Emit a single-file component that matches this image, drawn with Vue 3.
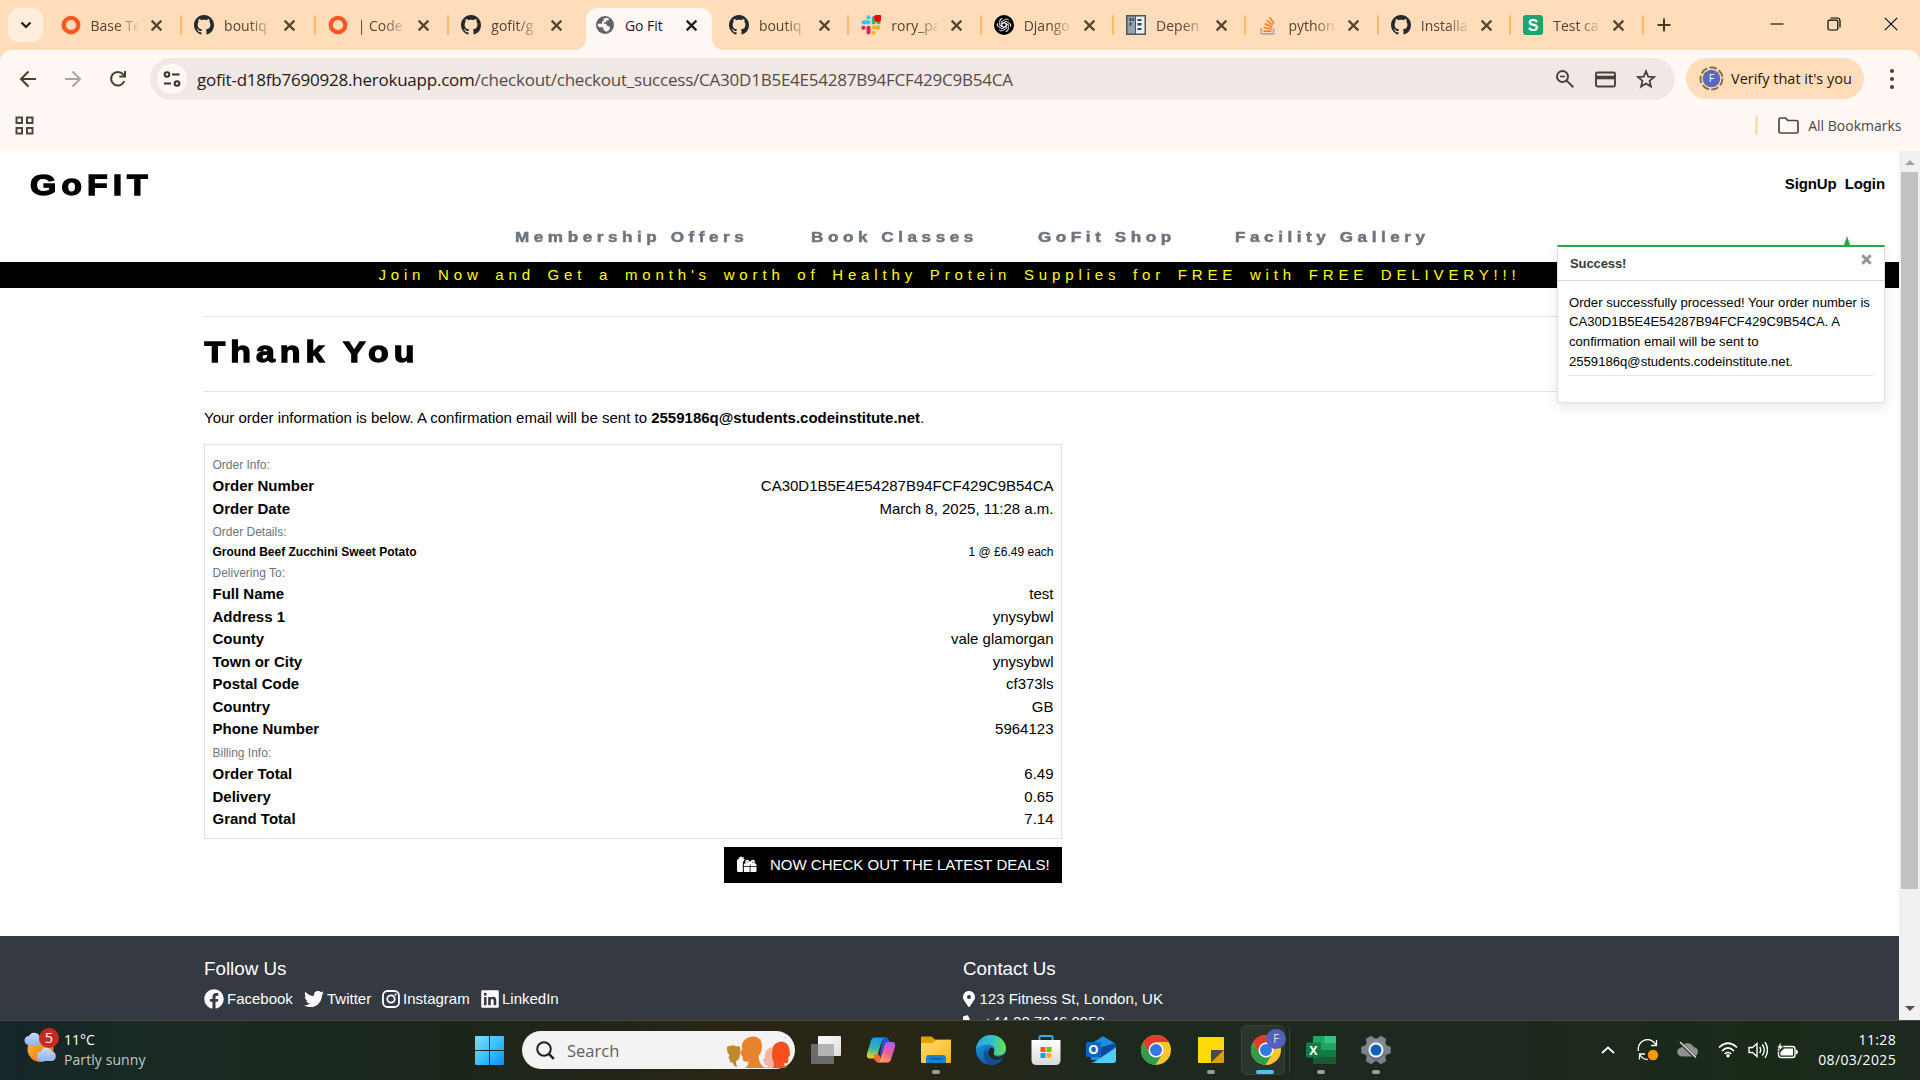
<script setup>
const tabs = [
  { icon: 'ring', title: 'Base Te' },
  { icon: 'github', title: 'boutiq' },
  { icon: 'ring', title: '| Code' },
  { icon: 'github', title: 'gofit/g' },
  { icon: 'globe', title: 'Go Fit', active: true },
  { icon: 'github', title: 'boutiq' },
  { icon: 'slack', title: 'rory_pa' },
  { icon: 'gpt', title: 'Django' },
  { icon: 'docs', title: 'Depen' },
  { icon: 'stack', title: 'python' },
  { icon: 'github', title: 'Installa' },
  { icon: 'sheet', title: 'Test ca' },
]

const nav = [
  { label: 'Membership Offers', w: 296 },
  { label: 'Book Classes', w: 227 },
  { label: 'GoFit Shop', w: 197 },
  { label: 'Facility Gallery', w: 205 },
]

const rows = [
  { head: 'Order Info:' },
  { k: 'Order Number', v: 'CA30D1B5E4E54287B94FCF429C9B54CA' },
  { k: 'Order Date', v: 'March 8, 2025, 11:28 a.m.' },
  { head: 'Order Details:', low: true },
  { k: 'Ground Beef Zucchini Sweet Potato', v: '1 @ £6.49 each', small: true },
  { head: 'Delivering To:' },
  { k: 'Full Name', v: 'test' },
  { k: 'Address 1', v: 'ynysybwl' },
  { k: 'County', v: 'vale glamorgan' },
  { k: 'Town or City', v: 'ynysybwl' },
  { k: 'Postal Code', v: 'cf373ls' },
  { k: 'Country', v: 'GB' },
  { k: 'Phone Number', v: '5964123' },
  { head: 'Billing Info:', tall: true },
  { k: 'Order Total', v: '6.49' },
  { k: 'Delivery', v: '0.65' },
  { k: 'Grand Total', v: '7.14' },
]

const github = 'M8 0C3.58 0 0 3.58 0 8c0 3.54 2.29 6.53 5.47 7.59.4.07.55-.17.55-.38 0-.19-.01-.82-.01-1.49-2.01.37-2.53-.49-2.69-.94-.09-.23-.48-.94-.82-1.13-.28-.15-.68-.52-.01-.53.63-.01 1.08.58 1.23.82.72 1.21 1.87.87 2.33.66.07-.52.28-.87.51-1.07-1.78-.2-3.64-.89-3.64-3.95 0-.87.31-1.59.82-2.15-.08-.2-.36-1.02.08-2.12 0 0 .67-.21 2.2.82.64-.18 1.32-.27 2-.27s1.36.09 2 .27c1.53-1.04 2.2-.82 2.2-.82.44 1.1.16 1.92.08 2.12.51.56.82 1.27.82 2.15 0 3.07-1.87 3.75-3.65 3.95.29.25.54.73.54 1.48 0 1.07-.01 1.93-.01 2.2 0 .21.15.46.55.38A8.01 8.01 0 0 0 16 8c0-4.42-3.58-8-8-8z'
const knot = [0, 60, 120, 180, 240, 300]
const teeth = [0, 60, 120, 180, 240, 300]
</script>

<template>
  <div class="screen">
    <div class="tabstrip">
      <div class="tabsearch">
        <svg width="12" height="8" viewBox="0 0 12 8"><path d="M1.5 1.5 6 6l4.5-4.5" fill="none" stroke="#261a0e" stroke-width="2.2" /></svg>
      </div>
      <div v-for="(t, i) in tabs" :key="i" class="tab" :class="{ active: t.active, early: i < 4, sep: i !== 3 && i !== 4 }">
        <svg v-if="t.icon === 'ring'" class="fav" viewBox="0 0 20 20"><ellipse cx="10" cy="10" rx="7.3" ry="7.2" fill="none" stroke="#ff5722" stroke-width="4.3" /></svg>
        <svg v-else-if="t.icon === 'github'" class="fav" viewBox="0 0 16 16"><path :d="github" fill="#24292f" /></svg>
        <svg v-else-if="t.icon === 'globe'" class="fav" viewBox="0 0 20 20">
          <circle cx="10" cy="10" r="9" fill="#5f6368" />
          <path d="M11.5 2.8c-3 .2-3.500 1.800-2.800 3.300-1.500.2-2.200 1.200-1.600 2.600H4c-.9 0-1.200 0-1.400.5.2 1.200.6 2.200 1.200 3.100h3.400c1 0 1.300.8 1.300 1.600v1.600h1.800v1.300c2 .1 4.600-1.500 4.700-4-.1-1.500-1.200-1.800-2.500-1.900l-1.500-2.200H8.900V7.200h2.300V5.500h2.200c0-1 .3-1.500 1-1.700z" fill="#fff8f4" />
        </svg>
        <svg v-else-if="t.icon === 'slack'" class="fav" viewBox="0 0 20 20">
          <g stroke-width="4" stroke-linecap="round">
            <path d="M2.500 7.300h5" stroke="#36c5f0" /><path d="M7.500 2.300v.1" stroke="#36c5f0" />
            <path d="M12.700 3v4.500" stroke="#2eb67d" /><path d="M17.600 7.400h.1" stroke="#2eb67d" />
            <path d="M12.700 12.600h4.800" stroke="#ecb22e" /><path d="M12.600 17.700v.1" stroke="#ecb22e" />
            <path d="M7.500 12.700v4.800" stroke="#e01e5a" /><path d="M2.400 12.700h.1" stroke="#e01e5a" />
          </g>
          <circle cx="16.800" cy="3.200" r="3.800" fill="#f00" />
        </svg>
        <svg v-else-if="t.icon === 'gpt'" class="fav" viewBox="0 0 20 20">
          <circle cx="10" cy="10" r="10" fill="#000" />
          <g fill="none" stroke="#fff" stroke-width=".9">
            <path v-for="a in knot" :key="a" d="M10 7.600 12.300 9v4.600l-3.600 2a2.800 2.800 0 0 1-3.500-.9" :transform="`rotate(${a} 10 10)`" />
          </g>
        </svg>
        <svg v-else-if="t.icon === 'docs'" class="fav" viewBox="0 0 20 20">
          <path d="M0 0h20v20H0z" fill="#45575f" /><path d="M1.500 1.500h7.500v17H1.500z" fill="#90a4ae" /><path d="M10 1.500h8.500v17H10z" fill="#eceff1" />
          <path d="M3.500 3h2v3h-2zM6.500 3h1.500v3H6.500zM3.500 7.500h2v3h-2zM11.500 4h4v2h-4zM11.500 8h4v2.500h-4zM11.500 13h4v2h-4z" fill="#37474f" />
        </svg>
        <svg v-else-if="t.icon === 'stack'" class="fav" viewBox="0 0 20 20">
          <path d="M3.300 13v5.800h12.200V13" fill="none" stroke="#a7abb0" stroke-width="1.700" />
          <g stroke="#f48024" stroke-width="1.700"><path d="M5.500 16.200h8" /><path d="m5.700 12.500 8 1.500" /><path d="m6.600 8.700 7.500 3.300" /><path d="m8.500 5.200 6.300 5" /><path d="m11.500 2.200 4.500 6.400" /></g>
        </svg>
        <svg v-else class="fav" viewBox="0 0 20 20">
          <rect width="20" height="20" rx="3" fill="#1aa571" /><text x="10" y="16" text-anchor="middle" font-family="Liberation Sans, sans-serif" font-weight="700" font-size="16" fill="#fff">S</text>
        </svg>
        <span class="title">{{ t.title }}</span>
        <svg class="x" viewBox="0 0 12 12"><path d="m1.500 1.500 9 9m0-9-9 9" stroke="currentColor" stroke-width="2" /></svg>
      </div>
      <svg class="plus" width="14" height="14" viewBox="0 0 14 14"><path d="M7 .5v13M.5 7h13" stroke="#4a3a28" stroke-width="2" /></svg>
      <div class="winctl">
        <svg width="14" height="14" viewBox="0 0 14 14"><path d="M.5 7h13" stroke="#000" stroke-width="1.100" /></svg>
        <svg width="14" height="14" viewBox="0 0 14 14" fill="none" stroke="#000" stroke-width="1.200"><rect x="1" y="3.200" width="9.800" height="9.800" rx="1.500" /><path d="M3.500 1h6.500q3 0 3 3v6.500" /></svg>
        <svg width="14" height="14" viewBox="0 0 14 14"><path d="m.8.8 12.400 12.400m0-12.400L.8 13.200" stroke="#000" stroke-width="1.100" /></svg>
      </div>
    </div>

    <div class="chrome">
      <div class="toolbar">
        <div class="navbtns">
          <svg width="18" height="18" viewBox="0 0 18 18" fill="none" stroke="#4d3e2c" stroke-width="2"><path d="M17 9H2.500M9.500 1.500 2 9l7.500 7.500" /></svg>
          <svg width="18" height="18" viewBox="0 0 18 18" fill="none" stroke="#b0a6a0" stroke-width="2"><path d="M1 9h14.500M8.500 1.500 16 9l-7.500 7.500" /></svg>
          <svg width="18" height="18" viewBox="0 0 18 18" fill="none" stroke="#4d3e2c" stroke-width="2"><path d="M15.300 11A6.800 6.800 0 1 1 14 4.200l1.500 1.500" /><path d="M16 1v5.500H10.300" /></svg>
        </div>
        <div class="omni">
          <div class="site">
            <svg width="18" height="16" viewBox="0 0 18 16" fill="none" stroke="#3b2f2a" stroke-width="2"><circle cx="4" cy="3.500" r="2.300" /><path d="M9 3.500h7.500M1 12.500h7" /><circle cx="14" cy="12.500" r="2.300" /></svg>
          </div>
          <div class="url">gofit-d18fb7690928.herokuapp.com<span>/checkout/checkout_success/CA30D1B5E4E54287B94FCF429C9B54CA</span></div>
          <div class="omni-icons">
            <svg width="20" height="20" viewBox="0 0 20 20" fill="none" stroke="#4a3f3a" stroke-width="2"><circle cx="7.500" cy="7.500" r="5.500" /><path d="m11.600 11.600 6.700 6.700" /><path d="M5 7.500h5" stroke-width="1.600" /></svg>
            <svg width="21" height="20" viewBox="0 0 21 20" fill="none" stroke="#4a3f3a" stroke-width="1.900"><rect x="1" y="3.500" width="19" height="14" rx="1.500" /><path d="M1 8.500h19" stroke-width="3.600" /></svg>
            <svg width="20" height="20" viewBox="0 0 20 20" fill="none" stroke="#4a3f3a" stroke-width="1.800"><path d="m10 2.300 2.200 5.300 5.800.5-4.400 3.800 1.300 5.600-4.900-3-4.900 3 1.300-5.600L2 8.100l5.800-.5z" /></svg>
          </div>
        </div>
        <div class="verify">
          <svg width="25" height="25" viewBox="0 0 25 25"><circle cx="12.500" cy="12.500" r="11" fill="none" stroke="#8b6c45" stroke-width="2" stroke-dasharray="7.500 2.400" /><circle cx="12.500" cy="12.500" r="8.800" fill="#5a69bd" /><text x="12.500" y="16.300" text-anchor="middle" font-family="Open Sans, sans-serif" font-size="10.500" fill="#fff">F</text></svg>
          <span>Verify that it's you</span>
        </div>
        <svg class="dots" width="4" height="20" viewBox="0 0 4 20" fill="#4a3a28"><circle cx="2" cy="2" r="2" /><circle cx="2" cy="10" r="2" /><circle cx="2" cy="18" r="2" /></svg>
      </div>
      <div class="bookmarks">
        <svg width="19" height="19" viewBox="0 0 19 19" fill="none" stroke="#51463d" stroke-width="2"><path d="M1.500 1.500h5.500v5.500H1.500zM12 1.500h5.500v5.500H12zM1.500 12h5.500v5.500H1.500zM12 12h5.500v5.500H12z" /></svg>
        <div class="allbm">
          <i></i>
          <svg width="21" height="17" viewBox="0 0 21 17" fill="none" stroke="#51463d" stroke-width="1.700"><path d="M1 14.500v-12Q1 1 2.500 1h5l2.300 2.500h8.700Q20 3.500 20 5v9.500q0 1.500-1.500 1.500h-16Q1 16 1 14.500z" /></svg>
          <span>All Bookmarks</span>
        </div>
      </div>
    </div>

    <div class="viewport">
      <div class="page">
        <header>
          <div class="brandrow"><div class="brand heavy">GoFIT</div><div class="auth"><span>SignUp</span><span>Login</span></div></div>
          <nav><a v-for="n in nav" :key="n.label" :style="{ width: n.w + 'px' }"><span>{{ n.label }}</span></a></nav>
          <div class="banner">Join Now and Get a month's worth of Healthy Protein Supplies for FREE with FREE DELIVERY!!!</div>
        </header>
        <main>
          <hr />
          <h2 class="heavy">Thank You</h2>
          <hr />
          <p class="lead">Your order information is below. A confirmation email will be sent to <b>2559186q@students.codeinstitute.net</b>.</p>
          <div class="card">
            <template v-for="(r, i) in rows" :key="i">
              <div v-if="r.head" class="head" :class="{ tall: r.tall, low: r.low }">{{ r.head }}</div>
              <div v-else class="row" :class="{ small: r.small }"><b>{{ r.k }}</b><span>{{ r.v }}</span></div>
            </template>
          </div>
          <div class="actions">
            <a class="deals">
              <svg width="20" height="17" viewBox="0 0 20 17" fill="#fff"><path d="M0 4.500Q0 3 1.500 3H2L1.300 1.300 3 1.500 4 0l1 1.500 2.200-.7L6.300 3h1.400L6.500 5.200q-.7.700-.7 2v8.800H1.500Q0 16 0 14.500z" /><path d="M6.800 10V8.500q0-1 1-1h.8Q7.500 4 10 3.700q2 0 3 2.200 1-2.200 3-2.200 2.700.3 1.500 3.800h1q1 0 1 1V10h-5.800V8.500h-.8V10zM9.700 6.600h1.400Q10.600 5.400 10 5.400t-.3 1.200zm5.200 0h1.400Q16.600 5.400 16 5.400t-1.100 1.200zM6.800 10.800h5.900v5.200H7.800q-1 0-1-1zM13.500 10.800h6v4.200q0 1-1 1h-5z" /></svg>
              <span>NOW CHECK OUT THE LATEST DEALS!</span>
            </a>
          </div>
        </main>
        <footer>
          <div class="follow">
            <h5>Follow Us</h5>
            <div class="links">
              <a class="l1"><svg width="20" height="20" viewBox="0 0 512 512"><path d="M504 256C504 119 393 8 256 8S8 119 8 256c0 123.780 90.690 226.380 209.250 245V327.690h-63V256h63v-54.640c0-62.150 37-96.480 93.670-96.480 27.140 0 55.520 4.840 55.520 4.840v61h-31.280c-30.800 0-40.410 19.120-40.410 38.730V256h68.780l-11 71.690h-57.780V501C413.310 482.380 504 379.780 504 256z" /></svg>Facebook</a>
              <a class="l2"><svg width="20" height="20" viewBox="0 0 512 512"><path d="M459.370 151.716c.325 4.548.325 9.097.325 13.645 0 138.720-105.583 298.558-298.558 298.558-59.452 0-114.680-17.219-161.137-47.106 8.447.974 16.568 1.299 25.340 1.299 49.055 0 94.213-16.568 130.274-44.832-46.132-.975-84.792-31.188-98.112-72.772 6.498.974 12.995 1.624 19.818 1.624 9.421 0 18.843-1.300 27.614-3.573-48.081-9.747-84.143-51.980-84.143-102.985v-1.299c13.969 7.797 30.214 12.670 47.431 13.319-28.264-18.843-46.781-51.005-46.781-87.391 0-19.492 5.197-37.360 14.294-52.954 51.655 63.675 129.300 105.258 216.365 109.807-1.624-7.797-2.599-15.918-2.599-24.040 0-57.828 46.782-104.934 104.934-104.934 30.213 0 57.502 12.670 76.670 33.137 23.715-4.548 46.456-13.320 66.599-25.340-7.798 24.366-24.366 44.833-46.132 57.827 21.117-2.273 41.584-8.122 60.426-16.243-14.292 20.791-32.161 39.308-52.628 54.253z" /></svg>Twitter</a>
              <a class="l3"><svg width="18" height="20" viewBox="0 0 18 20"><g fill="none" stroke="#fff" stroke-width="1.800"><rect x="1" y="2" width="16" height="16" rx="4.500" /><circle cx="9" cy="10" r="3.700" /></g><circle cx="13.600" cy="5.500" r="1.100" /></svg>Instagram</a>
              <a class="l4"><svg width="18" height="20" viewBox="0 0 448 512"><path d="M416 32H31.900C14.300 32 0 46.500 0 64.300v383.400C0 465.500 14.300 480 31.900 480H416c17.600 0 32-14.500 32-32.300V64.300c0-17.800-14.400-32.300-32-32.300zM135.400 416H69V202.200h66.500V416zm-33.200-243c-21.300 0-38.500-17.300-38.500-38.500S80.900 96 102.200 96c21.200 0 38.500 17.300 38.500 38.500 0 21.300-17.200 38.500-38.500 38.500zm282.100 243h-66.400V312c0-24.800-.5-56.700-34.500-56.700-34.600 0-39.900 27-39.900 54.900V416h-66.400V202.200h63.700v29.200h.9c8.900-16.800 30.600-34.500 62.900-34.500 67.200 0 79.700 44.300 79.700 101.900V416z" /></svg>LinkedIn</a>
            </div>
          </div>
          <div class="contact">
            <h5>Contact Us</h5>
            <div class="line"><svg width="12" height="16" viewBox="0 0 384 512"><path d="M172.268 501.670C26.970 291.031 0 269.413 0 192 0 85.961 85.961 0 192 0s192 85.961 192 192c0 77.413-26.970 99.031-172.268 309.670-9.535 13.774-29.930 13.773-39.464 0zM192 256a64 64 0 1 0 0-128 64 64 0 0 0 0 128z" /></svg>123 Fitness St, London, UK</div>
            <div class="line phone"><svg width="15" height="15" viewBox="0 0 15 15"><path d="M.7 1.200 4.200.2q.7-.1 1 .5l1.500 3.500q.2.600-.3 1L4.600 6.800q1.200 2.400 3.600 3.600l1.600-1.900q.4-.5 1-.2l3.500 1.500q.6.300.5 1l-.8 3.500q-.2.700-.9.700Q0 15 0 2q0-.6.7-.8z" /></svg>+44 20 7946 0958</div>
          </div>
        </footer>
        <div class="arrow"></div>
        <div class="toast">
          <div class="thead"><strong>Success!</strong><svg width="11" height="11" viewBox="0 0 11 11"><path d="m1.300 1.300 8.400 8.400m0-8.400L1.300 9.700" stroke="#949494" stroke-width="3" /></svg></div>
          <div class="tbody">
            <div>Order successfully processed! Your order number is</div>
            <div>CA30D1B5E4E54287B94FCF429C9B54CA. A</div>
            <div>confirmation email will be sent to</div>
            <div>2559186q@students.codeinstitute.net.</div>
            <hr />
          </div>
        </div>
      </div>
      <div class="scroll">
        <svg width="10" height="5" viewBox="0 0 10 5"><path d="M0 5 5 0l5 5z" fill="#a3a3a3" /></svg>
        <div class="thumb"></div>
        <svg width="10" height="5" viewBox="0 0 10 5"><path d="M0 0h10L5 5z" fill="#505050" /></svg>
      </div>
    </div>

    <div class="taskbar">
      <div class="weather">
        <svg width="38" height="38" viewBox="0 0 38 38">
          <defs>
            <linearGradient id="sun" x1="0" y1="0" x2="1" y2="1"><stop offset="0" stop-color="#fbc02d" /><stop offset="1" stop-color="#ee6a10" /></linearGradient>
            <linearGradient id="cl" x1="0" y1="0" x2="0" y2="1"><stop offset="0" stop-color="#c9dcfb" /><stop offset="1" stop-color="#8fb5f2" /></linearGradient>
          </defs>
          <circle cx="16.500" cy="22" r="13" fill="url(#sun)" />
          <path d="M5 18a4.500 4.500 0 0 1 0-9 6 6 0 0 1 10-1v10z" fill="url(#cl)" />
          <path d="M17 34a4.800 4.800 0 0 1 0-9.500 5.500 5.500 0 0 1 10.500-.3A5 5 0 0 1 28 34z" fill="url(#cl)" />
          <circle cx="25" cy="11" r="10" fill="#c62b20" />
          <text x="25" y="16.200" text-anchor="middle" font-family="Open Sans, sans-serif" font-size="14.500" fill="#fff">5</text>
        </svg>
        <div class="wtext"><div>11°C</div><div class="dim">Partly sunny</div></div>
      </div>
      <div class="apps">
        <svg class="start" width="29" height="29" viewBox="0 0 29 29">
          <defs><linearGradient id="win" x1="0" y1="0" x2="1" y2="1"><stop offset="0" stop-color="#81dcfb" /><stop offset=".5" stop-color="#3cc2fc" /><stop offset="1" stop-color="#0a8ff6" /></linearGradient></defs>
          <path d="M1 0h13v14H0V1q0-1 1-1zM15 0h13q1 0 1 1v13H15zM0 15h14v14H1q-1 0-1-1zM15 15h14v13q0 1-1 1H15z" fill="url(#win)" />
        </svg>
        <div class="search">
          <svg width="19" height="19" viewBox="0 0 19 19" fill="none" stroke="#222"><circle cx="8" cy="8" r="6.800" stroke-width="2" /><path d="m12.800 12.800 5 5" stroke-width="2.600" /></svg>
          <span>Search</span>
          <svg class="people" width="64" height="32" viewBox="0 0 64 32">
            <path d="M1 11q1-1.500 3-1 4-1.500 6 .5l3-.5 1.500 2-.8 9q-1 3-3.700 4-.5 3 1.500 6-4-.5-5-4.500H5q-1.500-.5-1.200-3L2.500 22l1-3q-3-3-2.500-8z" fill="#c08a2e" />
            <path d="M52 11q-6-1-10 2-4 3-3 8l-2.500 3.500 1.800 1.500q0 4 3 3l1 2H38l-1 1h17z" fill="#f6b3a3" />
            <path d="M18 4.500Q22 .5 28 .5q8 1 8 10 0 6-3.500 9.500 0 7 6 12H19q3.500-2.500 3.500-6.500-4.500.5-5.500-1l-.5-4-2.500-3.500 2.300-4q-1.300-5 1.700-8.500z" fill="#e9822f" />
            <path d="M48 9q3-3.500 8-3.500 6.500 1 7.500 8l.5 5.500-1.500 2.500-.5 5q-2 1.500-4.500.5 1 3 3.500 5H46.500q2.500-3 1-6-2-3.500-1.500-8 .5-7 2-9z" fill="#f4511e" />
          </svg>
        </div>
        <div class="app"><svg width="30" height="28" viewBox="0 0 30 28"><defs><linearGradient id="tv" x1="0" y1="0" x2="1" y2="1"><stop offset="0" stop-color="#fff" /><stop offset="1" stop-color="#dcdcdc" /></linearGradient></defs><rect x="7" width="23" height="20" rx="1" fill="url(#tv)" /><rect y="8" width="23" height="20" rx="1" fill="#6b6b6b" /><path d="M7 8h16v12H7z" fill="#b4b4b4" /></svg></div>
        <div class="app"><svg width="30" height="28" viewBox="0 0 30 28">
          <defs>
            <linearGradient id="cpa" x1=".3" y1="0" x2=".2" y2="1"><stop offset="0" stop-color="#1a9bf0" /><stop offset=".5" stop-color="#37b6a8" /><stop offset="1" stop-color="#f5d020" /></linearGradient>
            <linearGradient id="cpb" x1=".8" y1="0" x2=".3" y2="1"><stop offset="0" stop-color="#b05cf5" /><stop offset=".5" stop-color="#ee5a95" /><stop offset="1" stop-color="#ffa45c" /></linearGradient>
          </defs>
          <path d="M17 1h3q2 0 3 3l1 3-5 1-6 15z" fill="#2454d8" />
          <path d="M8.500 1.500H19q-2 0-3 3L11.500 19q-1 3.500-3.500 3.500H4q-4 0-3-5L5 4.500q1-3 3.500-3z" fill="url(#cpa)" />
          <path d="M21.500 26.500H11q2 0 3-3L18.500 9Q19.500 6 22 6h4q4 0 3 5l-4 12.500q-1 3-3.500 3z" fill="url(#cpb)" />
          <path d="M8 19q-1 3.500 1.500 6 1.500 2 3.500 1.200L15 22l-3-4z" fill="#ef6a3c" />
        </svg></div>
        <div class="app"><svg width="30" height="28" viewBox="0 0 30 28"><defs><linearGradient id="fo" x1="0" y1="0" x2="1" y2="1"><stop offset="0" stop-color="#ffdb6b" /><stop offset="1" stop-color="#f9b61c" /></linearGradient></defs><path d="M0 1.500Q0 .5 1 .5h9.500l3.500 3H30V12H0z" fill="#dfa000" /><path d="M0 7h11.500L15 4h14q1 0 1 1v21q0 1-1 1H1q-1 0-1-1z" fill="url(#fo)" /><path d="M5 27v-5q0-3 3-3h14q3 0 3 3v5z" fill="#1583d8" /><path d="M9 22.700h12" stroke="#0d5ba5" stroke-width="1.600" /></svg><i class="ind"></i></div>
        <div class="app"><svg width="30" height="30" viewBox="0 0 30 30">
          <defs><linearGradient id="eg" x1="0" y1=".3" x2="1" y2=".4"><stop offset="0" stop-color="#2ba5e0" /><stop offset=".55" stop-color="#35c1c8" /><stop offset="1" stop-color="#6be04a" /></linearGradient><linearGradient id="eb" x1="0" y1="0" x2=".6" y2="1"><stop offset="0" stop-color="#1f9fe8" /><stop offset="1" stop-color="#0c59a4" /></linearGradient></defs>
          <circle cx="15" cy="15" r="15" fill="url(#eb)" />
          <path d="M0 14C1 5 8 0 15 0c9 0 15 7 15 13 0 5-4 7.500-8 7.500-4 0-5-2-4-3.500 2-3 0-7-6-7.500Q4 9.500 0 14z" fill="url(#eg)" />
          <path d="M11 12q-2 4 0 9 4 7 15 3.500Q21 30 14.500 30 8 28 8 20q0-5 3-8z" fill="#134d94" />
          <path d="M18 17q-1.500 3 2 4.500 4.500 1.500 10-3.500-.5 5-3.500 7-8 3-13-3-3-6 1-9.500 4.500 0 3.500 4.500z" fill="#1e2a1e" />
          <path d="M27.500 22.500Q20 27 14.500 22.500q-3.500-4-2.500-9-3 5-.5 10.500 6 6 14 1.500z" fill="#134d94" />
        </svg></div>
        <div class="app"><svg width="30" height="30" viewBox="0 0 30 30"><defs><linearGradient id="st" x1="0" y1="0" x2="0" y2="1"><stop offset="0" stop-color="#fff" /><stop offset="1" stop-color="#dadada" /></linearGradient></defs><path d="M8.500 6V2.200q0-1.200 1.200-1.200h10.600q1.200 0 1.200 1.200V6" fill="none" stroke="#2bb3ee" stroke-width="2" /><path d="M.5 5h29v20q0 5-5 5h-19q-5 0-5-5z" fill="url(#st)" /><path d="M9.500 12h5v5h-5z" fill="#f25022" /><path d="M15.500 12h5v5h-5z" fill="#7fba00" /><path d="M9.500 18h5v5h-5z" fill="#00a4ef" /><path d="M15.500 18h5v5h-5z" fill="#ffb900" /></svg></div>
        <div class="app"><svg width="30" height="28" viewBox="0 0 30 28"><path d="M5 8 16 .8q1-.6 2 0L30 8v16H5z" fill="#1a8fe0" /><path d="m12 12 18-5v5L14 22z" fill="#0d479f" /><path d="M30 11v13q0 3-3 3H8z" fill="#35bdf3" /><path d="m5 27 25-14v11q0 3-3 3z" fill="#5cd8fb" opacity=".6" /><rect y="6" width="15" height="15" rx="1.500" fill="#0a64c4" /><text x="7.500" y="18.300" text-anchor="middle" font-family="Open Sans, sans-serif" font-weight="700" font-size="13" fill="#fff">O</text></svg></div>
        <div class="app"><svg width="30" height="30" viewBox="0 0 30 30"><circle cx="15" cy="15" r="15" fill="#fdc52b" /><path d="M15 7h13A15 15 0 0 0 2 7.600L8.500 19z" fill="#e33b2e" /><path d="M2 7.500A15 15 0 0 0 14.500 30l7-11.500-6.500 4L8.600 19z" fill="#2f9e4c" /><circle cx="15" cy="15" r="7.500" fill="#fff" /><circle cx="15" cy="15" r="6" fill="#3578e5" /></svg></div>
        <div class="app"><svg width="26" height="26" viewBox="0 0 26 26"><path d="M1 0h24q1 0 1 1v12L14 26H1q-1 0-1-1V1q0-1 1-1z" fill="#fdd908" /><path d="M13 13h13L13 26z" fill="#4b4b45" /><path d="M26 13v12q0 1-1 1H13z" fill="#e0a000" /></svg><i class="ind"></i></div>
        <div class="app current"><div class="plate"></div><svg width="30" height="30" viewBox="0 0 30 30"><circle cx="15" cy="15" r="15" fill="#fdc52b" /><path d="M15 7h13A15 15 0 0 0 2 7.600L8.500 19z" fill="#e33b2e" /><path d="M2 7.500A15 15 0 0 0 14.500 30l7-11.500-6.500 4L8.600 19z" fill="#2f9e4c" /><circle cx="15" cy="15" r="7.500" fill="#fff" /><circle cx="15" cy="15" r="6" fill="#3578e5" /></svg><b class="fbadge">F</b><i class="ind on"></i></div>
        <div class="app"><svg width="30" height="28" viewBox="0 0 30 28"><path d="M7 1q0-1 1-1h21q1 0 1 1v26q0 1-1 1H8q-1 0-1-1z" fill="#21a366" /><path d="M18.500 0H29q1 0 1 1v6H18.500z" fill="#33c481" /><path d="M7 14h23v7H7z" fill="#107c41" /><path d="M7 21h23v6q0 1-1 1H8q-1 0-1-1z" fill="#185c37" /><rect y="6.500" width="15" height="15" rx="1" fill="#107c41" /><text x="7.500" y="18.500" text-anchor="middle" font-family="Open Sans, sans-serif" font-weight="700" font-size="12.500" fill="#fff">X</text></svg><i class="ind"></i></div>
        <div class="app"><svg width="30" height="30" viewBox="0 0 30 30"><defs><linearGradient id="ge" x1="0" y1="0" x2="0" y2="1"><stop offset="0" stop-color="#8d959f" /><stop offset="1" stop-color="#66707d" /></linearGradient></defs><circle cx="15" cy="15" r="11.500" fill="url(#ge)" /><path v-for="a in teeth" :key="a" d="M10 5.500 11.500 1q.2-.8 1-.8h5q.8 0 1 .8L20 5.500z" fill="#79828e" :transform="`rotate(${a + 30} 15 15)`" /><circle cx="15" cy="15" r="7.500" fill="#f4f6f8" /><circle cx="15" cy="15" r="5.500" fill="#1160b7" /></svg><i class="ind"></i></div>
      </div>
      <div class="tray">
        <svg class="t1" width="14" height="8" viewBox="0 0 14 8"><path d="m1 7 6-5.500L13 7" fill="none" stroke="#fff" stroke-width="1.800" /></svg>
        <svg class="t2" width="22" height="22" viewBox="0 0 22 22"><g fill="none" stroke="#fff" stroke-width="1.300"><path d="M1.500 12A9.300 9.300 0 0 1 19 6M19.500 1v5.500H14M2.500 20.500V15h5.500M2.700 15.500q3 5 8 5" /></g><circle cx="16" cy="16" r="5.200" fill="#ff9800" /></svg>
        <svg class="t3" width="22" height="18" viewBox="0 0 22 18"><path d="M5 15.500a4.500 4.500 0 0 1-.5-9A6.500 6.500 0 0 1 16.500 6 4.800 4.800 0 0 1 17 15.500z" fill="#8e928e" /><path d="m3 1.500 16 15.500" stroke="#222b20" stroke-width="3" /><path d="m3 1 16 15.500" stroke="#e8e8e8" stroke-width="1.300" /></svg>
        <svg class="t4" width="20" height="16" viewBox="0 0 20 16" fill="none" stroke="#fff" stroke-width="1.700"><path d="M1 5.500q9-8.500 18 0M4 9q6-6 12 0M6.800 12q3.200-3.400 6.400 0" /><circle cx="10" cy="13.800" r="1.700" fill="#fff" stroke="none" /></svg>
        <svg class="t5" width="20" height="18" viewBox="0 0 20 18" fill="none" stroke="#fff" stroke-width="1.400"><path d="M1 6.500h3.500L9 2.500v13l-4.500-4H1z" /><path d="M11.700 6q2 3 0 6M14.300 3.500q4 5.500 0 11M17 1.200q5 7.800 0 15.600" /></svg>
        <svg class="t6" width="21" height="17" viewBox="0 0 21 17"><rect x="1.500" y="4.500" width="16.500" height="11" rx="2.500" fill="none" stroke="#fff" stroke-width="1.400" /><path d="M3.500 13.500v-3.500L7 6.500h9v7z" fill="#fff" /><path d="M19 7.500q2 .5 2 2.500t-2 2.500z" fill="#fff" /><path d="M4 0 0 6h2.500L1.500 10 6.500 4H4z" fill="#fff" stroke="#1e2a1c" stroke-width=".6" /></svg>
        <div class="clock"><div>11:28</div><div>08/03/2025</div></div>
      </div>
    </div>
  </div>
</template>

<style>
body { margin: 0; background: #fff; }
</style>

<style scoped>
* { box-sizing: border-box; }
svg { display: block; flex: none; }
.screen { width: 1920px; height: 1080px; overflow: hidden; display: flex; flex-direction: column; font-family: "Open Sans", "Noto Sans", sans-serif; background: #fff; }

.tabstrip { height: 50px; flex: none; display: flex; background: #ffddbb; }
.tabsearch { width: 35px; height: 34px; margin: 8px 4.500px 0 8px; border-radius: 11px; background: #ffeddd; display: flex; align-items: center; justify-content: center; flex: none; }
.tab { width: 132.400px; flex: none; height: 42px; margin-top: 8px; padding-left: 13px; display: flex; align-items: center; position: relative; color: #544431; padding-bottom: 8px; }
.tab.early { width: 133.600px; }
.tab.active { width: 134px; color: #1d1b1a; }
.tab.active::before { content: ""; position: absolute; left: 4px; right: 4px; top: 0; bottom: 0; background: #fff8f4; border-radius: 12px 12px 0 0; }
.tab.active::after { content: ""; position: absolute; left: -8px; right: -8px; bottom: 0; height: 12px; background: radial-gradient(circle at 0 0, #ffddbb 12px, #fff8f4 12.500px) left / 12px 12px no-repeat, radial-gradient(circle at 100% 0, #ffddbb 12px, #fff8f4 12.500px) right / 12px 12px no-repeat; }
.tab > * { position: relative; }
.tab.sep::after { content: ""; position: absolute; right: -1px; top: 7px; width: 2px; height: 20px; border-radius: 1px; background: #ffb866; }
.fav { width: 20px; height: 20px; }
.title { margin-left: 10px; width: 47px; padding-top: 1px; white-space: nowrap; font-size: 14px; line-height: 22px; -webkit-mask-image: linear-gradient(90deg, #000 55%, rgba(0, 0, 0, .15) 98%); mask-image: linear-gradient(90deg, #000 55%, rgba(0, 0, 0, .15) 98%); }
.active .title { -webkit-mask-image: none; mask-image: none; }
.x { width: 13px; height: 13px; margin-left: 12px; }
.active .x { margin-left: 13px; }
.plus { margin: 18px 0 0 14px; }
.winctl { margin: 17px 22px 0 auto; display: flex; gap: 43px; }

.chrome { height: 101px; flex: none; background: linear-gradient(#ffddbb, #ffddbb) top / 100% 12px no-repeat; }
.toolbar { height: 58px; background: #fff8f4; border-radius: 12px 12px 0 0; display: flex; align-items: flex-start; padding-top: 8px; }
.navbtns { display: flex; gap: 27px; margin: 12px 0 0 19px; width: 131px; flex: none; }
.omni { width: 1525px; height: 42px; border-radius: 21px; background: #f0e8e4; display: flex; align-items: center; padding-left: 7px; flex: none; }
.site { width: 30px; height: 30px; border-radius: 50%; background: #fff8f4; display: flex; align-items: center; justify-content: center; flex: none; }
.url { margin-left: 10px; font-size: 17px; line-height: 24px; white-space: nowrap; color: #1f1a17; letter-spacing: -0.225px; padding-top: 1px; }
.url span { color: #544c48; }
.omni-icons { margin-left: auto; display: flex; gap: 20px; padding-right: 19px; }
.verify { width: 178px; height: 41px; margin-left: 11px; border-radius: 21px; background: #ffddbb; display: flex; align-items: center; padding-left: 13px; font-size: 14.500px; color: #2b1700; white-space: nowrap; flex: none; }
.verify span { margin-left: 7px; }
.dots { margin: 11px 0 0 26px; }
.bookmarks { height: 43px; background: #fff8f4; display: flex; padding: 8px 18.500px 0 15px; justify-content: space-between; }
.allbm { display: flex; height: 20px; align-items: center; color: #51463d; font-size: 14px; margin-top: -1px; white-space: nowrap; }
.allbm i { width: 3px; height: 20px; border-radius: 2px; background: #ffddbb; margin-right: 20px; }
.allbm span { margin-left: 9.500px; }

.viewport { height: 869px; flex: none; display: flex; font-family: "Liberation Sans", Arial, sans-serif; font-size: 15px; color: #000; }
.page { width: 1899px; height: 869px; overflow: hidden; position: relative; flex: none; }
.heavy { font-weight: 700; font-size: 30px; letter-spacing: 4.400px; -webkit-text-stroke: 1.300px #000; transform: scaleX(1.13); transform-origin: 0 0; }
.brandrow { height: 68px; display: flex; justify-content: space-between; padding: 0 14px 0 29.500px; }
.brand { line-height: 68.600px; }
.auth { display: flex; gap: 8px; font-weight: 700; line-height: 65.600px; letter-spacing: -0.1px; }
nav { height: 43px; padding-left: 514.500px; display: flex; line-height: 36px; font-weight: 700; color: #6c757d; letter-spacing: 4px; -webkit-text-stroke: .5px #6c757d; white-space: nowrap; }
nav a { flex: none; }
nav span { display: inline-block; transform: scaleX(1.14); transform-origin: 0 0; }
.banner { height: 26px; background: #000; color: #ff0; line-height: 26px; text-align: center; letter-spacing: 4.850px; word-spacing: 3.700px; white-space: nowrap; }
hr { border: 0; height: 1px; margin: 0; background: #e3e3e3; }
main { width: 1491px; margin: 28px 0 0 204px; height: 620px; }
h2 { margin: 0; width: 400px; height: 74px; padding-left: .5px; line-height: 70px; }
.lead { margin: 14.500px 0 14.500px; line-height: 22.500px; white-space: nowrap; }
.card { width: 858px; border: 1px solid #dee2e6; padding: 9.500px 7.500px 7px; color: #000; }
.head { height: 21px; line-height: 21px; padding-top: 1px; font-size: 12px; color: #6c757d; }
.head.low { padding-top: 2px; }
.head.tall { height: 22.500px; line-height: 23px; }
.row { height: 22.500px; line-height: 22.500px; display: flex; justify-content: space-between; }
.row.small { height: 21px; line-height: 21px; padding-top: 1px; font-size: 12px; }
.actions { width: 858px; display: flex; justify-content: flex-end; margin-top: 8px; }
.deals { width: 338px; height: 36px; background: #000; color: #fff; display: flex; align-items: center; padding-left: 13px; white-space: nowrap; }
.deals span { margin-left: 13px; }
footer { height: 84px; background: #353941; color: #fff; display: flex; padding-left: 204px; overflow: hidden; }
footer svg { fill: #fff; }
.follow { width: 759px; }
h5 { margin: 0; font-weight: 400; font-size: 18.750px; line-height: 22.500px; padding-top: 21.500px; }
.links { display: flex; margin-top: 8px; line-height: 22.500px; }
.links a { display: flex; align-items: center; white-space: nowrap; flex: none; }
.links svg { margin-right: 3px; }
.l1 { width: 100px; }
.l2 { width: 78px; }
.l3 { width: 99px; }
.line { display: flex; align-items: center; height: 22.500px; margin-top: 7.300px; white-space: nowrap; }
.line svg { margin-right: 4.500px; }
.line.phone { margin-top: 0; }
.line.phone svg { margin: 2px 5.500px 0 0; }

.arrow { position: absolute; left: 1844px; top: 85px; border: 3px solid transparent; border-top: 0; border-bottom: 9px solid #28a745; }
.toast { position: absolute; left: 1557px; top: 94px; width: 328px; height: 158px; background: #fff; border: 1px solid #e0e0e0; border-top: 2px solid #28a745; box-shadow: 0 4px 12px rgba(0, 0, 0, .1); font-size: 13.125px; }
.thead { height: 34px; border-bottom: 1px solid #d8d8d8; display: flex; justify-content: space-between; padding: 7px 12.500px 0 12px; line-height: 19px; color: #343a40; }
.thead strong { font-size: 13px; letter-spacing: -0.1px; }
.tbody { padding: 12px 11px 0; white-space: nowrap; line-height: 20px; }
.tbody div:first-child { height: 19px; }
.tbody hr { margin-top: 3px; }
.scroll { width: 21px; background: #f1f1f1; display: flex; flex-direction: column; align-items: center; padding: 9px 0; flex: none; }
.thumb { width: 17px; height: 717px; margin: 7px 0 auto; background: #c1c1c1; }

.taskbar { height: 60px; flex: none; display: flex; border-top: 1px solid #45483c; background: linear-gradient(90deg, #162629 0, #1a2a22 180px, #1b261b 460px, #2a2516 740px, #292615 900px, #1d281e 1120px, #1d281e 1500px, #1a2a18 1780px, #1d291f 1920px); color: #fff; font-size: 14px; }
.weather { display: flex; width: 475px; padding-left: 24px; flex: none; }
.weather svg { margin-top: 6px; }
.wtext { margin: 9px 0 0 2px; line-height: 20px; white-space: nowrap; }
.dim { color: #c3c8c2; letter-spacing: .08px; }
.apps { display: flex; align-items: center; height: 58px; flex: none; }
.search { width: 273px; height: 38px; margin: 0 3px 0 18px; background: #f3f3f3; border-radius: 19px; display: flex; align-items: center; padding: 0 5px 0 14px; color: #5e5e5e; font-size: 16.500px; }
.search span { margin-left: 12px; }
.people { margin: 4px 0 0 auto; }
.app { width: 55px; height: 58px; display: flex; align-items: center; justify-content: center; position: relative; flex: none; }
.app > svg { position: relative; }
.ind { position: absolute; bottom: 5px; left: 23.500px; width: 8px; height: 4px; border-radius: 2px; background: #9b9d97; }
.ind.on { width: 18px; left: 18px; background: #4cc2ff; }
.plate { position: absolute; left: 2.500px; top: 4px; width: 44px; height: 50px; border-radius: 5px; background: #2c352c; border: 1px solid #3a433a; box-shadow: 5px 0 0 -1px #1d281e, 6px 0 0 -1px #39413a; }
.fbadge { position: absolute; left: 28px; top: 8px; width: 20px; height: 20px; border-radius: 50%; background: #5461b8; color: #d8dcf4; font-size: 12px; font-weight: 400; line-height: 20px; text-align: center; }
.tray { display: flex; margin-left: auto; align-items: center; height: 58px; flex: none; }
.t2 { margin-left: 22px; }
.t3 { margin-left: 18px; }
.t4 { margin-left: 19px; }
.t5 { margin-left: 10px; }
.t6 { margin-left: 9px; }
.clock { width: 98px; margin-right: 24px; text-align: right; line-height: 20px; letter-spacing: .35px; }
</style>
